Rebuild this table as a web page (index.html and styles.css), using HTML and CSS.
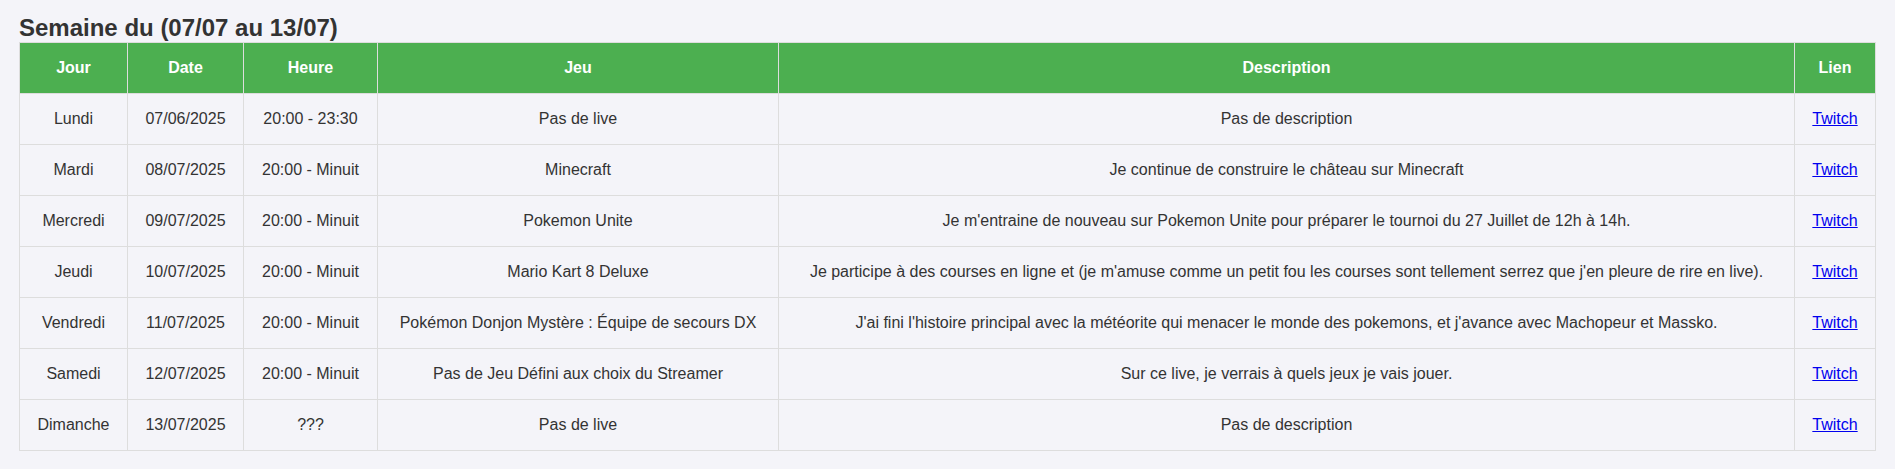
FILE: index.html
```html
<!DOCTYPE html>
<html lang="fr">
<head>
<meta charset="utf-8">
<title>Planning</title>
<link rel="stylesheet" href="styles.css">
</head>
<body>
<h2 class="title">Semaine du (07/07 au 13/07)</h2>
<table class="schedule">
  <colgroup>
    <col class="c-jour"><col class="c-date"><col class="c-heure"><col class="c-jeu"><col class="c-desc"><col class="c-lien">
  </colgroup>
  <thead>
    <tr><th>Jour</th><th>Date</th><th>Heure</th><th>Jeu</th><th>Description</th><th>Lien</th></tr>
  </thead>
  <tbody>
    <tr><td>Lundi</td><td>07/06/2025</td><td>20:00 - 23:30</td><td>Pas de live</td><td>Pas de description</td><td><a href="#">Twitch</a></td></tr>
    <tr><td>Mardi</td><td>08/07/2025</td><td>20:00 - Minuit</td><td>Minecraft</td><td>Je continue de construire le château sur Minecraft</td><td><a href="#">Twitch</a></td></tr>
    <tr><td>Mercredi</td><td>09/07/2025</td><td>20:00 - Minuit</td><td>Pokemon Unite</td><td>Je m'entraine de nouveau sur Pokemon Unite pour préparer le tournoi du 27 Juillet de 12h à 14h.</td><td><a href="#">Twitch</a></td></tr>
    <tr><td>Jeudi</td><td>10/07/2025</td><td>20:00 - Minuit</td><td>Mario Kart 8 Deluxe</td><td>Je participe à des courses en ligne et (je m'amuse comme un petit fou les courses sont tellement serrez que j'en pleure de rire en live).</td><td><a href="#">Twitch</a></td></tr>
    <tr><td>Vendredi</td><td>11/07/2025</td><td>20:00 - Minuit</td><td>Pokémon Donjon Mystère : Équipe de secours DX</td><td>J'ai fini l'histoire principal avec la météorite qui menacer le monde des pokemons, et j'avance avec Machopeur et Massko.</td><td><a href="#">Twitch</a></td></tr>
    <tr><td>Samedi</td><td>12/07/2025</td><td>20:00 - Minuit</td><td>Pas de Jeu Défini aux choix du Streamer</td><td>Sur ce live, je verrais à quels jeux je vais jouer.</td><td><a href="#">Twitch</a></td></tr>
    <tr><td>Dimanche</td><td>13/07/2025</td><td>???</td><td>Pas de live</td><td>Pas de description</td><td><a href="#">Twitch</a></td></tr>
  </tbody>
</table>
</body>
</html>
```
FILE: styles.css
```css
html, body {
  margin: 0;
  background: #f4f4f9;
}
body {
  padding: 14px 20px 0 19px;
  font-family: "Liberation Sans", Arial, sans-serif;
  color: #333;
}
.title {
  margin: 0;
  font-size: 24px;
  font-weight: bold;
  color: #333;
}
.schedule {
  width: 100%;
  border-collapse: collapse;
  table-layout: fixed;
  font-size: 16px;
}
.schedule th,
.schedule td {
  border: 1px solid #ddd;
  padding: 16px 4px;
  text-align: center;
  white-space: nowrap;
}
.schedule th {
  background: #4caf50;
  color: #fff;
  font-weight: bold;
  border-color: #ddd;
}
.schedule a {
  color: #0000ee;
}
.c-jour { width: 108px; }
.c-date { width: 116px; }
.c-heure { width: 134px; }
.c-jeu { width: 401px; }
.c-desc { width: 1016px; }
.c-lien { width: 81px; }
```
